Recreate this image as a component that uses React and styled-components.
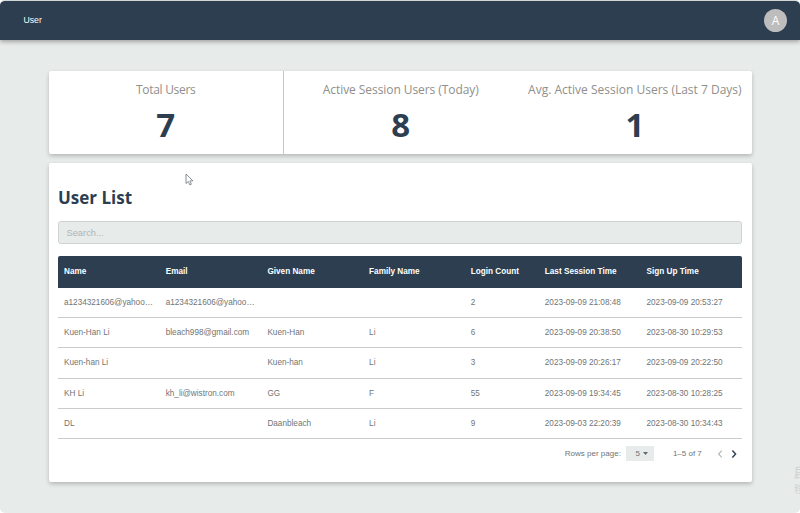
import styled, { createGlobalStyle } from "styled-components";

const GlobalStyle = createGlobalStyle`
  html, body {
    margin: 0;
    padding: 0;
    background: #fff;
  }
  body {
    font-family: "Liberation Sans", Arial, sans-serif;
  }
`;

const stats = [
  { label: "Total Users", value: 7, tracking: -0.3 },
  { label: "Active Session Users (Today)", value: 8, tracking: -0.07 },
  { label: "Avg. Active Session Users (Last 7 Days)", value: 1, tracking: 0 },
];

const columns = ["Name", "Email", "Given Name", "Family Name", "Login Count", "Last Session Time", "Sign Up Time"];

const rows = [
  ["a1234321606@yahoo…", "a1234321606@yahoo…", "", "", "2", "2023-09-09 21:08:48", "2023-09-09 20:53:27"],
  ["Kuen-Han Li", "bleach998@gmail.com", "Kuen-Han", "Li", "6", "2023-09-09 20:38:50", "2023-08-30 10:29:53"],
  ["Kuen-han Li", "", "Kuen-han", "Li", "3", "2023-09-09 20:26:17", "2023-09-09 20:22:50"],
  ["KH Li", "kh_li@wistron.com", "GG", "F", "55", "2023-09-09 19:34:45", "2023-08-30 10:28:25"],
  ["DL", "", "Daanbleach", "Li", "9", "2023-09-03 22:20:39", "2023-08-30 10:34:43"],
];

export default function App() {
  return (
    <Page>
      <GlobalStyle />
      <TopBar>
        <PageName>User</PageName>
        <Avatar>A</Avatar>
      </TopBar>
      <Main>
        <StatsCard>
          {stats.map((s) => (
            <Stat key={s.label}>
              <StatLabel $tracking={s.tracking}>{s.label}</StatLabel>
              <StatValue>{s.value}</StatValue>
            </Stat>
          ))}
        </StatsCard>
        <ListCard>
          <Cursor viewBox="0 0 9 13">
            <path d="M1 1v9.5l2.3-2 1.5 3.4 1.6-.7-1.5-3.3h3z" fill="#fff" stroke="#6d7377" strokeWidth="0.8" />
          </Cursor>
          <Title>User List</Title>
          <SearchBox placeholder="Search..." />
          <Table>
            <thead>
              <tr>
                {columns.map((c) => (
                  <Th key={c}>{c}</Th>
                ))}
              </tr>
            </thead>
            <tbody>
              {rows.map((r) => (
                <tr key={r[0]}>
                  {r.map((v, i) => (
                    <Td key={i}>{v}</Td>
                  ))}
                </tr>
              ))}
            </tbody>
          </Table>
          <Pagination>
            <span>Rows per page:</span>
            <PageSize>
              5
              <svg width="5" height="3" viewBox="0 0 5 3">
                <path d="M0 0h5L2.5 3z" fill="#5f6b73" />
              </svg>
            </PageSize>
            <PageRange>1–5 of 7</PageRange>
            <PageArrows>
              <svg width="8" height="10" viewBox="0 0 8 10">
                <path d="M5.8 1.6L2.6 5l3.2 3.4" fill="none" stroke="#b4b8ba" strokeWidth="1.2" />
              </svg>
              <svg width="8" height="10" viewBox="0 0 8 10">
                <path d="M2.4 1.6L5.6 5 2.4 8.4" fill="none" stroke="#2c3e50" strokeWidth="1.4" />
              </svg>
            </PageArrows>
          </Pagination>
        </ListCard>
      </Main>
      <Watermark>
        <BigMark>啟</BigMark>
        <SmallMark>移</SmallMark>
      </Watermark>
    </Page>
  );
}

const Page = styled.div`
  position: relative;
  width: 800px;
  height: 513px;
  box-sizing: border-box;
  overflow: hidden;
  background: #e7ebea;
  border-top: 1px solid #d3d6d6;
  border-radius: 5px;
`;

const TopBar = styled.header`
  height: 39px;
  box-sizing: border-box;
  display: flex;
  align-items: center;
  justify-content: space-between;
  padding: 0 13px 1px 23.5px;
  background: #2c3e50;
  border-radius: 4px 4px 0 0;
  box-shadow: 0 2px 4px rgba(0, 0, 0, 0.3);
`;

const PageName = styled.div`
  color: #fff;
  font-size: 8.7px;
`;

const Avatar = styled.div`
  width: 23px;
  height: 23px;
  border-radius: 50%;
  background: #bdbdbd;
  color: #fff;
  font-family: "Open Sans", sans-serif;
  font-size: 12px;
  display: flex;
  align-items: center;
  justify-content: center;
`;

const Main = styled.main`
  width: 702.7px;
  margin: 30.7px 0 0 49px;
  display: flex;
  flex-direction: column;
  gap: 9px;
`;

const StatsCard = styled.section`
  height: 83.3px;
  display: grid;
  grid-template-columns: 234.5px 234.5px 1fr;
  background: #fff;
  border-radius: 2px;
  box-shadow: 0 2px 4px rgba(0, 0, 0, 0.22);
`;

const Stat = styled.div`
  display: flex;
  flex-direction: column;
  align-items: center;
  &:first-child {
    border-right: 1px solid #c4c8c8;
  }
`;

const StatLabel = styled.div`
  margin-top: 11px;
  font-family: "Open Sans", sans-serif;
  font-size: 12px;
  line-height: 16px;
  letter-spacing: ${(p) => p.$tracking}px;
  color: #8f8f8b;
  white-space: nowrap;
`;

const StatValue = styled.div`
  margin-top: 5.5px;
  font-family: "Open Sans", sans-serif;
  font-size: 33px;
  line-height: 44px;
  font-weight: 700;
  color: #2c3e50;
`;

const ListCard = styled.section`
  position: relative;
  height: 318.7px;
  box-sizing: border-box;
  padding: 23px 9.4px 0 9px;
  background: #fff;
  border-radius: 2px;
  box-shadow: 0 2px 4px rgba(0, 0, 0, 0.22);
`;

const Cursor = styled.svg`
  position: absolute;
  left: 136px;
  top: 10px;
  width: 9px;
  height: 13px;
`;

const Title = styled.h1`
  margin: 0;
  font-family: "Open Sans", sans-serif;
  font-size: 17px;
  line-height: 24px;
  font-weight: 700;
  color: #2c3e50;
`;

const SearchBox = styled.input`
  display: block;
  width: 100%;
  height: 23.6px;
  box-sizing: border-box;
  margin-top: 10.7px;
  padding: 1px 7.5px 0;
  background: #e7ebea;
  border: 1px solid #ced2d1;
  border-radius: 3px;
  font-family: "Liberation Sans", sans-serif;
  font-size: 9.3px;
  &::placeholder {
    color: #b0b5b5;
  }
`;

const Table = styled.table`
  width: 100%;
  margin-top: 11.5px;
  border-collapse: separate;
  border-spacing: 0;
  table-layout: fixed;
`;

const Th = styled.th`
  height: 32.2px;
  padding: 0 6px;
  box-sizing: border-box;
  background: #2c3e50;
  color: #fff;
  font-size: 8.2px;
  font-weight: 700;
  text-align: left;
  &:first-child {
    border-top-left-radius: 2px;
  }
  &:last-child {
    border-top-right-radius: 2px;
  }
  &:nth-child(5) {
    width: 74px;
  }
`;

const Td = styled.td`
  height: 30.2px;
  padding: 0 6px;
  box-sizing: border-box;
  border-bottom: 1px solid #c8cccc;
  color: #707577;
  font-size: 8.2px;
  white-space: nowrap;
`;

const Pagination = styled.div`
  display: flex;
  align-items: center;
  justify-content: flex-end;
  height: 30px;
  padding-right: 4px;
  color: #6f7476;
  font-size: 8px;
`;

const PageSize = styled.div`
  margin-left: 5.5px;
  width: 28px;
  height: 15px;
  box-sizing: border-box;
  padding-left: 9px;
  display: flex;
  align-items: center;
  gap: 3px;
  background: #e7ebea;
`;

const PageRange = styled.span`
  margin-left: 18.5px;
`;

const PageArrows = styled.div`
  margin-left: 14.5px;
  display: flex;
  gap: 6px;
`;

const Watermark = styled.div`
  position: absolute;
  left: 794px;
  top: 463px;
  width: 6px;
  overflow: hidden;
  display: flex;
  flex-direction: column;
  gap: 2px;
  color: #d0d3d3;
  font-family: "Noto Sans CJK TC", sans-serif;
`;

const BigMark = styled.span`
  font-size: 14px;
  line-height: 17px;
`;

const SmallMark = styled.span`
  font-size: 10px;
  line-height: 12px;
`;
